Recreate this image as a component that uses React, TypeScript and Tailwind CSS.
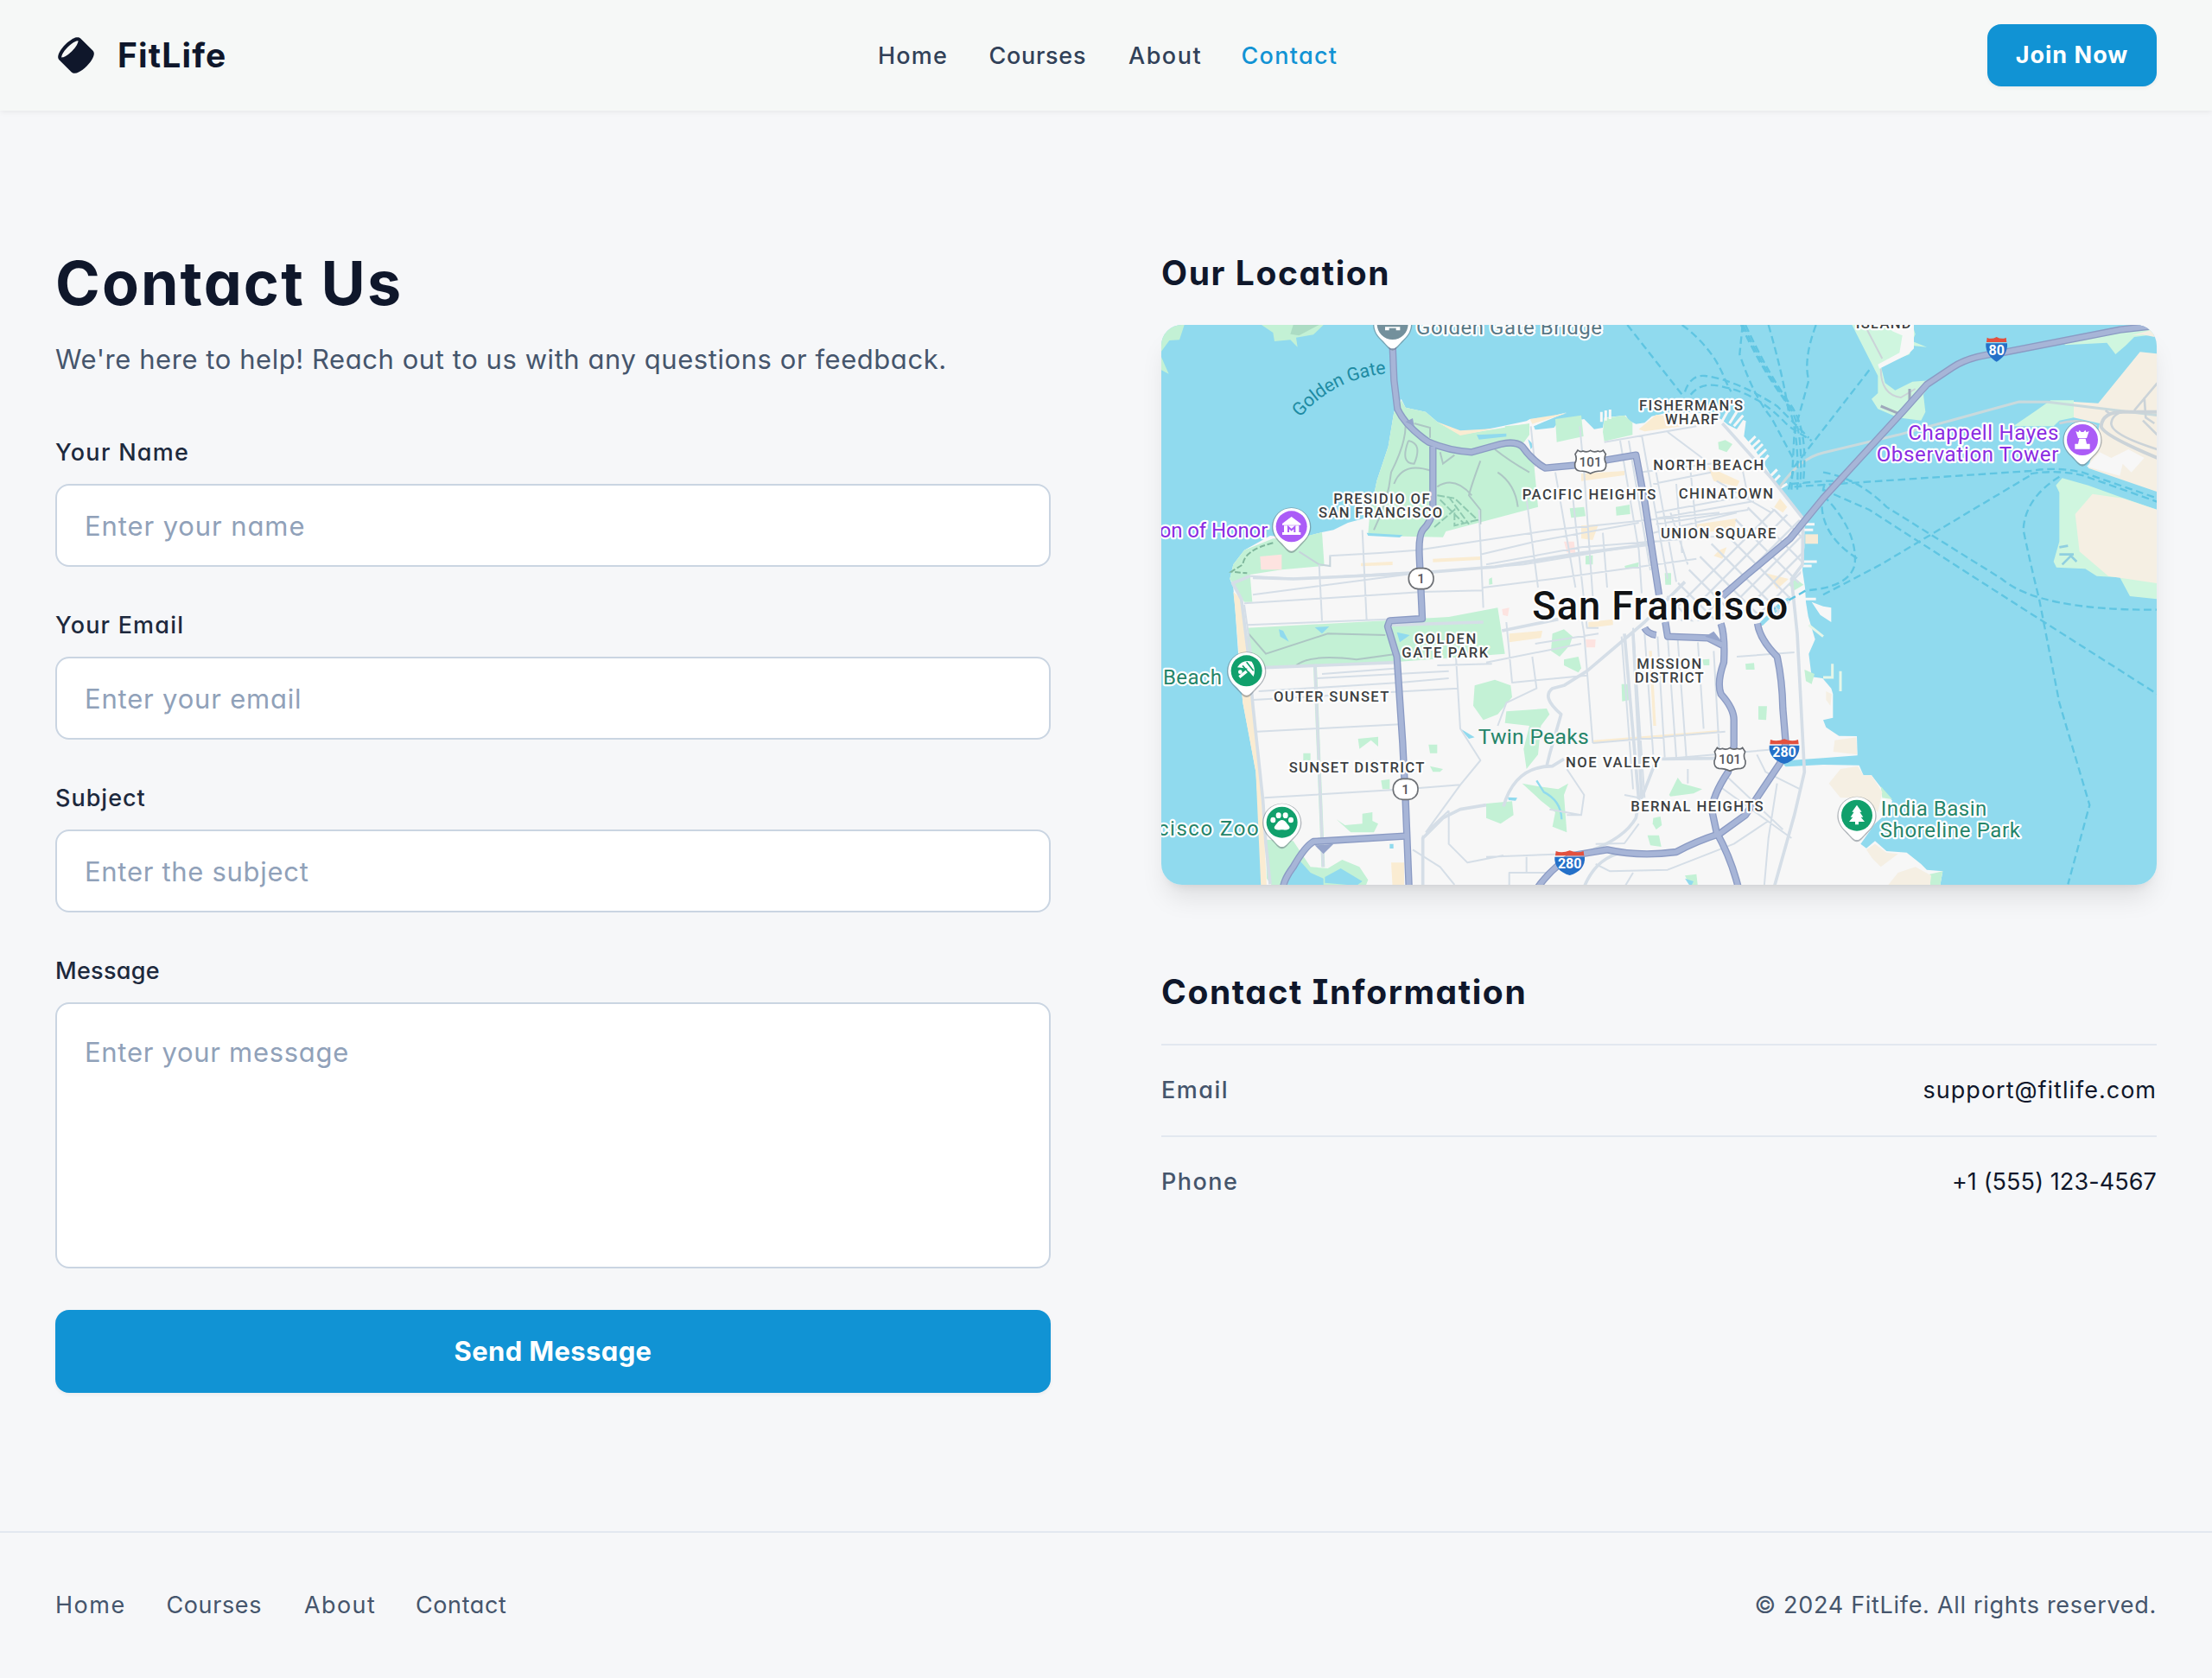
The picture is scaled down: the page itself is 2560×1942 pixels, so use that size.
import React from "react";

const headerLinks = [
  { label: "Home", className: "w-[80.5px] tracking-[1.2px]" },
  { label: "Courses", className: "w-[113.5px] tracking-[0.7px]" },
  { label: "About", className: "w-[82.5px] tracking-[1.5px]" },
  { label: "Contact", className: "w-[107.5px] tracking-[1.3px]" },
];

const footerLinks = [
  { label: "Home", className: "w-[80.5px] tracking-[1.5px]" },
  { label: "Courses", className: "w-[111.5px] tracking-[0.6px]" },
  { label: "About", className: "w-[81px] tracking-[1.4px]" },
  { label: "Contact", className: "w-[108px] tracking-[0.6px]" },
];

function Logo() {
  return (
    <svg className="size-12" viewBox="0 0 48 48" fill="currentColor">
      <path d="M42.1739 20.1739L27.8261 5.82609C29.1366 7.13663 28.3989 10.1876 26.2002 13.7654C24.8538 15.9564 22.9595 18.3449 20.6522 20.6522C18.3449 22.9595 15.9564 24.8538 13.7654 26.2002C10.1876 28.3989 7.13663 29.1366 5.82609 27.8261L20.1739 42.1739C21.4845 43.4845 24.5355 42.7467 28.1133 40.548C30.3042 39.2016 32.6927 37.3073 35 35C37.3073 32.6927 39.2016 30.3042 40.548 28.1133C42.7467 24.5355 43.4845 21.4845 42.1739 20.1739Z" />
      <path
        fillRule="evenodd"
        clipRule="evenodd"
        d="M7.24189 26.4066C7.31369 26.4411 7.64204 26.5637 8.52504 26.3738C9.59462 26.1438 11.0343 25.5311 12.7183 24.4963C14.7583 23.2426 17.0256 21.4503 19.238 19.238C21.4503 17.0256 23.2426 14.7583 24.4963 12.7183C25.5311 11.0343 26.1438 9.59463 26.3738 8.52504C26.5637 7.64204 26.4411 7.31369 26.4066 7.24189C26.345 7.21246 26.143 7.14535 25.6664 7.1918C24.9745 7.25925 23.9954 7.5498 22.7699 8.14278C20.3369 9.32007 17.3369 11.4915 14.4142 14.4142C11.4915 17.3369 9.32007 20.3369 8.14278 22.7699C7.5498 23.9954 7.25925 24.9745 7.1918 25.6664C7.14534 26.143 7.21246 26.345 7.24189 26.4066ZM4.41187 29.2403L18.7597 43.5881C19.8813 44.7097 21.4027 44.9179 22.7217 44.7893C24.0585 44.659 25.5148 44.1631 26.9723 43.4579C29.9052 42.0387 33.2618 39.5667 36.4142 36.4142C39.5667 33.2618 42.0387 29.9052 43.4579 26.9723C44.1631 25.5148 44.659 24.0585 44.7893 22.7217C44.9179 21.4027 44.7097 19.8813 43.5881 18.7597L29.2403 4.41187C27.8527 3.02428 25.8765 3.02573 24.2861 3.36776C22.6081 3.72863 20.7334 4.58419 18.8396 5.74801C16.4978 7.18716 13.9881 9.18353 11.5858 11.5858C9.18354 13.988 7.18716 16.4978 5.74802 18.8396C4.58419 20.7334 3.72863 22.6081 3.36776 24.2861C3.02573 25.8765 3.02428 27.8527 4.41187 29.2403Z"
      />
    </svg>
  );
}

/* ---------- Map ---------- */

type LabelProps = {
  x: number;
  y: number;
  len: number;
  children: string;
  size?: number;
  color?: string;
  weight?: number;
  halo?: string;
};

function MapLabel({ x, y, len, children, size = 50, color = "#3c3f42", weight = 500, halo = "#ffffff" }: LabelProps) {
  return (
    <text
      x={x}
      y={y}
      textLength={len}
      fontSize={size}
      fontWeight={weight}
      fill={color}
      stroke={halo}
      strokeWidth={13}
      strokeLinejoin="round"
      paintOrder="stroke"
    >
      {children}
    </text>
  );
}

function Pin({ x, y, color, children }: { x: number; y: number; color: string; children?: React.ReactNode }) {
  return (
    <g transform={`translate(${x} ${y})`}>
      <path d="M0 92C-12 92 -20 78 -40 58C-58 40 -68 22 -68 2A68 68 0 0 1 68 2C68 22 58 40 40 58C20 78 12 92 0 92Z" fill="#5b6670" opacity=".45" />
      <path d="M0 85C-12 85 -18 74 -38 54C-56 38 -64 20 -64 0A64 64 0 0 1 64 0C64 20 56 38 38 54C18 74 12 85 0 85Z" fill="#fff" />
      <circle r="54" fill={color} />
      <g fill="#fff">{children}</g>
    </g>
  );
}

function Interstate({ x, y, label, w }: { x: number; y: number; label: string; w: number }) {
  const h = w / 2;
  return (
    <g transform={`translate(${x} ${y})`}>
      <path d={`M${-h + 4} -40Q${-h / 2} -32 0 -42Q${h / 2} -32 ${h - 4} -40L${h - 2} -24H${-h + 2}Z`} fill="#e2513f" />
      <path d={`M${-h} -20H${h}C${h + 3} 12 ${h - 18} 34 0 44C${-h + 18} 34 ${-h - 3} 12 ${-h} -20Z`} fill="#2470c8" />
      <text textAnchor="middle" y="20" fontSize="48" fontWeight="700" fill="#fff">
        {label}
      </text>
    </g>
  );
}

function Route101({ x, y }: { x: number; y: number }) {
  return (
    <g transform={`translate(${x} ${y})`}>
      <path
        d="M-44 -40Q-36 -32 -26 -37Q-12 -31 0 -39Q12 -31 26 -37Q36 -32 44 -40L53 -26Q45 -10 54 6Q56 30 38 32Q16 32 0 41Q-16 32 -38 32Q-56 30 -54 6Q-45 -10 -53 -26Z"
        fill="#fff"
        stroke="#666a70"
        strokeWidth="5"
      />
      <text textAnchor="middle" y="16" fontSize="46" fontWeight="500" fill="#55585c">
        101
      </text>
    </g>
  );
}

function Route1({ x, y }: { x: number; y: number }) {
  return (
    <g transform={`translate(${x} ${y})`}>
      <rect x="-43" y="-37" width="86" height="72" rx="34" fill="#fff" stroke="#6e7176" strokeWidth="5" />
      <text textAnchor="middle" y="16" fontSize="46" fontWeight="500" fill="#55585c">
        1
      </text>
    </g>
  );
}

const mainland =
  "M875 305L890 335L960 350L1000 385L1080 427L1200 405L1310 382L1322 375L1370 372L1450 352L1370 385L1335 400L1340 412L1405 405L1415 392L1510 375L1545 410L1575 405L1580 370L1655 362L1665 380L1690 392L1720 388L1745 365L1790 355L1900 350L1985 375L2010 395L2040 410L2062 378L2072 382L2065 435L2095 470L2135 530L2170 590L2205 640L2275 720L2275 820L2268 900L2277 960L2280 1010L2288 1060L2312 1140L2290 1190L2300 1270L2338 1275L2368 1310L2374 1330L2374 1412L2340 1420L2350 1445L2395 1475L2457 1476L2459 1543L2340 1552L2190 1562L2210 1582L2340 1575L2465 1577L2480 1612L2508 1612L2545 1660L2580 1700L2565 1740L2520 1780L2470 1850L2490 1865L2520 1840L2560 1875L2630 1880L2680 1920L2700 1940L2755 1945L2745 2000L390 2000L388 1850L380 1740L370 1600L350 1490L325 1360L310 1200L298 1030L292 960L280 930L292 880L330 830L420 780L520 790L600 768L640 760L690 735L765 715L790 590L830 470L850 350Z";

const highways = [
  "M845 120L850 240L862 340Q890 400 970 455Q1040 485 1120 490L1220 462Q1270 450 1295 470Q1330 520 1375 545L1480 535L1690 500L1720 660L1770 985",
  "M985 470L985 690Q980 730 950 760Q935 780 938 850L948 1068L835 1075L828 1095L860 1200L880 1500L890 1700L902 2000",
  "M3500 50L3370 65L2960 145Q2850 155 2790 195L2700 255L2620 345L2340 650L2225 790L2070 920L1990 990",
  "M900 1822L570 1842Q540 1860 500 1930Q470 1970 465 2000",
  "M1720 1100Q1730 1120 1760 1125M1792 1080L1800 1130L1940 1135L1990 1160",
  "M1985 1085Q2000 1130 1995 1220Q1970 1290 1985 1330Q2030 1380 2030 1420L2030 1510L2010 1600Q1950 1690 1955 1740L1970 1810Q2020 1900 2045 2000",
  "M2112 1085Q2120 1140 2180 1200Q2198 1280 2200 1380L2210 1500L2190 1570L2070 1750L1980 1815Q1900 1840 1830 1878Q1700 1895 1590 1870L1470 1890Q1400 1930 1350 2000",
];

const streets =
  "M360 985L930 910L1300 880L1660 820L1760 800M350 920L520 930L930 905M590 880L600 1075M740 760L755 1075M1145 690L1160 1030M330 1015L950 975L1160 970M625 850L800 840L930 830L1400 760L1980 700M1160 960L1400 930L1900 860M1170 880L1500 820L2000 780M1150 845L1340 800L1700 735M1495 400L1510 560L1540 990M1325 400L1340 540M1410 560L1480 960M1310 650L1350 960M1470 640L1520 1100L1560 1100M1575 770L1590 960M1635 450L1700 830L1710 980M1665 450L1740 900M1710 430L1800 930M1760 560L1830 940M1810 700L1870 880M1580 455L1900 400M1700 560L1990 525M1750 600L1950 560M1760 700L2080 640M1760 720L2100 660M1760 740L2080 690M1750 770L2040 700M1800 420L1920 510M1970 590L2160 700M1830 600L1850 840M1880 560L1900 760M2060 550L2080 650" +
  "M340 1090L830 1070M330 1020L360 1230M600 1260L870 1240M580 1275L1040 1250M380 1320L870 1290L1040 1275M360 1350L1070 1310M375 1460L870 1435M400 1690L890 1660L1080 1645M1065 1200L1080 1450L1150 1560L1080 1645L960 1810M950 1820L950 2000M915 1870L1010 1930L1060 1992M1040 1735L960 1810M1040 1735L1040 1850L1105 1915L1230 1890M1000 1230L1190 1225" +
  "M1170 1220L1500 1155M1240 1080L1260 1290L1520 1265M1330 1200L1345 1310L1240 1360L1210 1440M1340 1155L1560 1120M1500 1060L1510 1120L1540 1500M1640 1130L1680 1660M1680 1100L1720 1690M1720 1120L1750 1540M1765 1130L1790 1550M1800 1130L1830 1550M1835 1140L1865 1550M1905 1150L1925 1450M1960 1180L1980 1540M1540 1500L2000 1460M1700 1690L1650 1680M1790 1555L2190 1520M1390 1730L1500 1750M1450 1590L1510 1680L1500 1750L1450 1750M1550 1850L1650 1848L1700 1780M1550 1920L1600 1945L1800 1940L2030 1850L2150 1770M2040 1200L2240 1185M1980 1650L2230 1830M2010 1620L2200 1800M2180 1640L2150 1830L2135 2000M1170 1895L1450 1885M1310 1895L1310 1950M1250 2000L1250 1950L1400 1950M1650 2000L1680 1950M1870 1590L1870 1640M2110 1540L2140 1600L2260 1660";

const avenues =
  "M360 925L500 930L930 910L1200 888L1500 840L1740 810M1170 2010M1520 1250L1720 1080L1860 940M1225 1110L1420 1070M1520 1250L1440 1300L1400 1310Q1360 1340 1430 1400L1390 1540L1380 1580M1990 390L2160 580L2270 720L2268 880L2230 930L2250 1120L2275 1600L2240 1750L2170 2000M1650 1120L1700 1700L1690 1760Q1650 1830 1530 1875M1680 1120L1710 1690L1760 1560M1230 1720Q1270 1580 1400 1580L1440 1555M1780 1555L1970 1553M1170 1715L1080 1730L1020 1760L950 1830L950 2000M345 1240L860 1220M1510 2000Q1550 1900 1640 1880M420 1990L405 1850L395 1700L360 1370L345 1200L320 1000L290 945L350 920M1160 1080L830 1090";

const parks = [
  "M875 310L890 335L960 350L1000 385L1080 430L1320 390L1320 430L1290 470L1335 520L1350 680L1030 765L1020 785L880 782L760 772L765 715L790 590L830 470L850 350Z",
  "M430 790L510 790L600 768L608 885L460 898L350 915L358 1010L330 1010L280 930L292 880L330 830Z",
  "M340 1100L820 1075L1040 1062L1210 1030L1235 1190L860 1218L345 1240Z",
  "M1410 375L1500 362L1508 435L1415 455Z",
  "M1575 420L1580 372L1650 362L1678 388L1678 430L1580 452Z",
  "M1235 400L1320 392L1300 440L1240 430Z",
  "M1975 455L2000 448L2025 462L2005 490L1978 480Z",
  "M1460 685L1510 680L1515 712L1465 718Z",
  "M1620 680L1668 672L1670 705L1622 710Z",
  "M1515 850L1540 848L1540 880L1515 880Z",
  "M1650 885L1700 872L1698 888L1655 896Z",
  "M1790 910L1812 910L1812 950L1792 950Z",
  "M1400 1120L1440 1105L1470 1130L1460 1160L1425 1200L1395 1180Z",
  "M1440 1210L1490 1200L1500 1240L1490 1255L1440 1230Z",
  "M1130 1300L1200 1280L1255 1300L1260 1340L1210 1400L1160 1420L1125 1370Z",
  "M1240 1390L1380 1380L1390 1400L1360 1440L1350 1540L1310 1590L1300 1520L1320 1440L1235 1430Z",
  "M1295 1640L1350 1650L1420 1660L1455 1640L1440 1680L1450 1810L1400 1790L1410 1740L1360 1700Z",
  "M1170 1710L1260 1702L1265 1750L1220 1780L1170 1760Z",
  "M1640 1295L1668 1295L1670 1350L1642 1355Z",
  "M1920 1210L1945 1208L1945 1230L1925 1230Z",
  "M2070 1225L2100 1222L2102 1245L2072 1245Z",
  "M2115 1372L2145 1372L2142 1420L2115 1418Z",
  "M1805 1680L1835 1620L1850 1640L1920 1660L1890 1675L1810 1685Z",
  "M1750 1760L1775 1755L1780 1785L1760 1800L1748 1780Z",
  "M1730 1820L1770 1820L1778 1860L1740 1855Z",
  "M725 1485L795 1478L795 1512L770 1490L730 1520Z",
  "M535 1535L560 1535L560 1560L535 1560Z",
  "M970 1505L1000 1505L1000 1535L975 1535Z",
  "M975 1580L1020 1590L1010 1600L985 1600Z",
  "M805 1630L835 1625L835 1660L810 1660Z",
  "M650 1765L680 1785L740 1780L740 1745L775 1740L775 1770L795 1780L780 1810L700 1810Z",
  "M405 1835L500 1840L560 1930L620 1935L670 1905L730 1930L760 1975L750 2000L430 2000L408 1970Z",
  "M1180 930L1190 925L1192 948L1180 950Z",
  "M570 1235L582 1235L610 1930L598 1930Z",
  "M2220 950L2245 930L2272 950L2240 970Z",
  "M2275 1245L2310 1260L2300 1295L2280 1285Z",
  "M2540 1650L2580 1695L2545 1690Z",
  "M2710 1955L2755 1945L2745 2000L2712 2000Z",
  "M1860 1960L1900 1955L1905 2000L1880 2000Z",
];

const sand = [
  "M292 975L320 1000L340 1200L372 1460L400 1840L408 2000L388 2000L370 1600L325 1360L298 1030Z",
  "M1000 385L1080 415L1200 408L1080 432Z",
  "M1322 375L1450 355L1330 392Z",
  "M1700 410L1760 360L1850 370L1850 400L1720 418Z",
  "M1900 740L2040 720L2030 760L1900 770Z",
  "M1980 830L2005 820L1990 860L1960 850Z",
  "M2190 650L2215 680L2200 700L2170 680Z",
  "M2140 910L2220 930L2180 965Z",
  "M1940 540L2050 590L2040 610L1960 590Z",
  "M1500 745L1560 740L1540 795L1500 790Z",
  "M1500 565L1650 555L1650 570L1500 590Z",
  "M735 875L845 870L845 882L735 886Z",
  "M985 860L1150 852L1150 864L985 872Z",
  "M1250 1120L1365 1110L1360 1135L1250 1150Z",
  "M1525 1080L1610 1070L1610 1090L1525 1100Z",
  "M840 1915L885 1915L885 2000L845 2000Z",
  "M1735 1180L1745 1180L1760 1440L1750 1440Z",
  "M1540 1490L1980 1455L1980 1463L1540 1500Z",
];

const industrial = [
  "M2380 1490L2455 1480L2458 1540L2375 1530Z",
  "M2360 1640L2400 1590L2460 1580L2480 1612L2508 1612L2545 1670L2530 1740L2480 1690L2400 1690Z",
  "M2490 1870L2520 1850L2560 1880L2600 1885L2540 1930L2510 1900Z",
  "M2600 1950L2660 1930L2715 1960L2710 2000L2560 2000Z",
  "M2350 1320L2370 1330L2365 1370L2350 1350Z",
];

const ferries = [
  "M1660 48L1850 290",
  "M1850 48Q1960 130 2000 240L2020 280",
  "M2060 48L2050 150Q2100 300 2160 370L2240 520",
  "M2055 48Q2120 190 2200 300Q2260 380 2250 620",
  "M2070 48Q2150 220 2230 330Q2290 420 2270 600",
  "M2062 48Q2135 205 2215 318Q2275 400 2260 610",
  "M2150 48Q2200 220 2220 350",
  "M2315 48Q2270 170 2290 240L2240 420L2230 620",
  "M1860 280Q1880 220 1930 225Q2040 240 2180 330L2290 440",
  "M1880 290Q1920 240 2000 265Q2120 290 2220 400L2300 450",
  "M2500 205L2240 540L2220 620",
  "M2240 610L3060 555Q3150 540 3240 560L3500 650",
  "M3060 565Q3150 550 3240 570L3500 662",
  "M2340 985L2540 880L3060 570",
  "M2340 560Q2460 580 2560 680L2960 930Q3090 1040 3500 1037",
  "M2340 620L2500 690L3010 1018L3500 1330",
  "M3160 575Q3040 650 3035 760Q3060 880 3090 1000L3160 1360L3265 1715L3190 1990",
  "M2340 640Q2460 760 2450 880Q2430 960 2280 970L2140 1050",
  "M2345 600Q2300 760 2460 860",
  "M2230 600L2340 590L2440 590",
];

function SanFranciscoMap() {
  const soma = Array.from({ length: 9 }, (_, i) => i);
  return (
    <svg className="block h-full w-full" viewBox="42 48 3456 1944" fontFamily="Roboto, sans-serif">
      <defs>
        <clipPath id="soma">
          <path d="M2080 650L2270 730L2262 930L2200 1060L1850 1080L1790 1000Z" />
        </clipPath>
      </defs>
      <rect x="42" y="48" width="3456" height="1944" fill="#90daee" />

      {/* Marin headlands */}
      <g fill="#c3f1d5">
        <path d="M42 48H122L105 100L70 102L42 140ZM42 160L68 218L42 205Z" />
        <path d="M390 48L430 75L435 105L490 100L515 125L510 92L570 82L605 48Z" />
      </g>
      <path d="M500 48L490 80L520 85L590 48Z" fill="#acdcc4" />

      <path d={mainland} fill="#f7f7f7" />
      <g fill="#c3f1d5">
        {parks.map((d) => (
          <path key={d} d={d} />
        ))}
      </g>
      <g fill="#faecd2">
        {sand.map((d) => (
          <path key={d} d={d} />
        ))}
      </g>
      <g fill="#f5efe3">
        {industrial.map((d) => (
          <path key={d} d={d} />
        ))}
      </g>
      <g fill="#fde3e0">
        <path d="M385 852L460 845L460 898L388 898Z" />
        <path d="M1440 800L1475 800L1480 840L1450 838Z" />
        <path d="M1515 1140L1550 1140L1548 1168L1518 1168Z" />
        <path d="M1225 1035L1250 1030L1245 1060L1228 1055Z" />
      </g>

      {/* lakes and creeks */}
      <g fill="#90daee">
        <path d="M485 1950L520 1905L560 1950L605 1970L605 1995L480 2000ZM610 1965L665 1935L740 1980L720 1995L610 1985Z" />
        <path d="M575 1098L625 1095L600 1120ZM450 1105L465 1110L485 1148L455 1130ZM860 1115L905 1125L870 1150ZM1080 1450L1130 1480L1110 1485Z" />
        <path d="M1137 430L1240 425L1240 436L1145 446ZM755 770L880 778L870 786L760 780ZM1315 445L1335 465L1325 480Z" />
        <path d="M1245 1688L1278 1690L1272 1700L1248 1698ZM835 1850H848V1866H835ZM1860 1970L1890 1980L1880 2000Z" />
        <path d="M2110 1092L2190 1010L2225 990L2225 1000L2130 1092Z" />
      </g>
      <path d="M1345 1630L1370 1670Q1430 1700 1432 1765" fill="none" stroke="#90daee" strokeWidth="7" />

      {/* piers */}
      <g stroke="#f7f7f7" strokeWidth="9">
        <path d="M1570 350V385M1585 345V380M1600 342V375M1770 300V350M1810 305V360M1985 390L2010 345M2015 390L2040 350M2030 400L2062 362M2070 470L2105 435M2080 485L2120 448M2092 500L2130 462M2105 515L2142 480M2125 530L2150 500M2150 580L2180 550M2160 600L2190 570M2180 620L2215 600M2270 740H2310M2270 760H2305M2270 870H2318M2270 885H2300M2270 1000H2315" />
      </g>
      <path d="M2278 775H2322V808H2278Z" fill="#f6ead5" />
      <path d="M2300 1010L2340 1025L2368 1030L2368 1080L2330 1055Z" fill="#f7f7f7" />
      <path d="M2290 1090L2340 1130M2340 1272H2372V1225M2400 1250V1320" fill="none" stroke="#e5f6e8" strokeWidth="9" />

      {/* presidio and golden gate park paths */}
      <g fill="none" stroke="#adc6c4" strokeWidth="6">
        <path d="M890 400Q890 460 840 560Q830 660 780 760M920 390L975 405V440M900 450Q870 530 920 530Q950 460 900 450M850 600Q880 520 980 555M1010 490L1020 530L1060 500M1000 610Q1060 570 1120 640M1150 520Q1120 600 1110 640L1150 690V740M1210 560Q1270 600 1280 680M1200 480Q1250 520 1320 560M345 1120L405 1190L620 1120L820 1125M510 1230Q560 1190 720 1210L860 1190" />
        <path d="M1000 640L1060 650L1140 725L1060 745L1060 690L990 750M1010 655L1090 735M1040 645L1110 740" stroke="#8fc9b0" strokeDasharray="26 8" />
        <path d="M430 805Q330 830 325 880L285 905L340 910" stroke="#7fb79c" strokeDasharray="20 8" />
      </g>
      <path d="M520 835L590 880L628 885V850" fill="none" stroke="#c5d3da" strokeWidth="6" />

      {/* streets */}
      <g fill="none" stroke="#d5dee7" strokeLinejoin="round">
        <path d={streets} strokeWidth="6" />
        <path d={avenues} strokeWidth="11" />
        <path d="M576 1235L604 1930" strokeWidth="10" />
        <g clipPath="url(#soma)" strokeWidth="7">
          {soma.map((i) => (
            <path key={`a${i}`} d={`M${1780 + i * 52} ${1080 + i * 10}L${2180 + i * 52} ${680 + i * 10}`} />
          ))}
          {soma.map((i) => (
            <path key={`b${i}`} d={`M${2120 - i * 42} ${640 + i * 42}L${2400 - i * 42} ${920 + i * 42}`} />
          ))}
        </g>
      </g>

      {/* Treasure Island and Yerba Buena */}
      <path d="M2440 48L2530 225L2530 285L2508 305L2530 340L2600 370L2680 380L2695 350L2688 290L2720 240L2650 245L2590 275L2555 250L2540 190L2640 150L2650 120L2700 125L2650 105L2660 80L2650 48Z" fill="#cff6df" />
      <path d="M2570 48H2655V130L2635 150L2535 200L2530 185L2605 145L2615 85L2580 70Z" fill="#f7f7f7" />
      <path d="M2490 60L2545 165M2540 200Q2540 290 2610 300L2660 270" fill="none" stroke="#cbd3d8" strokeWidth="6" />
      <path d="M2540 330L2600 355L2640 320M2640 270V330" fill="none" stroke="#9fa9bb" strokeWidth="9" />

      {/* Oakland and Alameda */}
      <path d="M3170 105L3350 80L3500 48V80L3420 90L3390 120L3355 150L3325 110L3180 118Z" fill="#cff6df" />
      <path d="M3410 85L3500 60V92L3450 82Z" fill="#f5efe3" />
      <path d="M3000 400L3080 345L3130 310L3210 310V370L3160 380L3140 400Z" fill="#cff6df" />
      <path d="M3210 315L3295 320L3440 142L3500 148V628L3260 545L3290 440L3300 390L3210 370Z" fill="#f5efe3" />
      <path d="M3255 540L3300 490L3340 510L3400 480L3455 510L3410 560L3380 530L3370 572Z" fill="#f7f7f7" />
      <path d="M3170 580L3260 605L3370 645L3500 690V1000L3405 990L3370 925L3290 920L3250 895L3150 890L3140 870L3160 800L3160 630L3148 605Z" fill="#cff6df" />
      <path d="M3275 635L3380 650L3500 690V945L3330 920L3230 835L3215 705Z" fill="#f5efe3" />
      <path d="M3160 820L3190 815M3160 845H3210M3170 880L3200 850L3220 870" fill="none" stroke="#90cfe0" strokeWidth="8" />
      <g fill="none" stroke="#cbd3d8" strokeWidth="8">
        <path d="M2190 610Q2260 510 2340 492L2600 430L3020 315L3120 316L3280 335L3500 362" strokeWidth="9" stroke="#c9dadd" />
        <path d="M3500 350H3380Q3310 350 3305 400Q3310 430 3500 510" strokeWidth="12" />
        <path d="M3500 480Q3340 430 3340 390Q3345 350 3400 348M3500 250L3420 345M3455 300L3460 370L3490 390M3160 390Q3230 370 3290 400M3320 345L3340 360M3450 380L3500 430" />
      </g>

      {/* ferries */}
      <g fill="none" stroke="#5fc5e2" strokeWidth="7" strokeDasharray="26 14">
        {ferries.map((d) => (
          <path key={d} d={d} />
        ))}
      </g>

      {/* highways */}
      <g fill="none" strokeLinejoin="round">
        <g stroke="#8b9bc4" strokeWidth="25">
          {highways.map((d) => (
            <path key={d} d={d} />
          ))}
        </g>
        <g stroke="#a7b5d7" strokeWidth="17">
          {highways.map((d) => (
            <path key={d} d={d} />
          ))}
        </g>
      </g>
      <path d="M575 1855L640 1850L605 1885ZM1930 1130L1960 1112L1990 1150ZM890 385L915 372L920 400Z" fill="#95a4cb" />

      {/* shields */}
      <Interstate x={2942} y={132} label="80" w={74} />
      <Interstate x={2205} y={1528} label="280" w={104} />
      <Interstate x={1460} y={1915} label="280" w={104} />
      <Route101 x={1532} y={523} />
      <Route101 x={2016} y={1556} />
      <Route1 x={944} y={930} />
      <Route1 x={890} y={1661} />

      {/* pins */}
      <Pin x={845} y={45} color="#73909c">
        <path d="M-26 22V10H26V22H12V14H-12V22Z" />
      </Pin>
      <Pin x={494} y={748} color="#ab5cf7">
        <path d="M-32 -10L0 -34L32 -10V-5H-32ZM-26 -3H26V20H32V29H-32V20H-26Z" />
        <path d="M-11 20V2L0 12L11 2V20" fill="none" stroke="#ab5cf7" strokeWidth="6" />
      </Pin>
      <Pin x={3240} y={447} color="#ab5cf7">
        <path d="M-23 -30L-14 -26L-10 -34L-4 -27H4L10 -34L14 -26L23 -30L15 -6H-15ZM-11 -4H11L15 14H26V32H-26V14H-15Z" />
      </Pin>
      <Pin x={338} y={1249} color="#11a06c">
        <path d="M-32 -12Q-15 -40 18 -32Q34 -8 24 20L8 2L-22 26L-28 18L4 -8Z" />
        <circle cx="-22" cy="4" r="7" />
        <path d="M-14 -18L14 14M0 -30L24 0" stroke="#11a06c" strokeWidth="5" />
      </Pin>
      <Pin x={461} y={1775} color="#11a06c">
        <ellipse cx="-31" cy="-8" rx="9" ry="10" />
        <ellipse cx="-12" cy="-24" rx="9" ry="10" />
        <ellipse cx="12" cy="-24" rx="9" ry="10" />
        <ellipse cx="31" cy="-8" rx="9" ry="10" />
        <path d="M0 -8C12 -8 16 4 24 12C32 22 22 28 0 26C-22 28 -32 22 -24 12C-16 4 -12 -8 0 -8Z" />
      </Pin>
      <Pin x={2457} y={1751} color="#11a06c">
        <path d="M0 -36L17 -12H10L22 6H14L27 22H6V32H-6V22H-27L-14 6H-22L-10 -12H-17Z" />
      </Pin>

      {/* place names */}
      <MapLabel x={927} y={81} len={645} size={72} color="#587886" weight={400}>Golden Gate Bridge</MapLabel>
      <path id="golden-gate" d="M523 370Q645 230 835 216" fill="none" />
      <text fontSize="64" fill="#1e8ba3" textLength="345">
        <textPath href="#golden-gate" textLength="345">Golden Gate</textPath>
      </text>
      <MapLabel x={35} y={787} len={377} size={72} color="#8a2be2" weight={400}>on of Honor</MapLabel>
      <MapLabel x={48} y={1295} len={204} size={72} color="#25856a" weight={400}>Beach</MapLabel>
      <MapLabel x={30} y={1822} len={350} size={72} color="#25856a" weight={400}>cisco Zoo</MapLabel>
      <MapLabel x={2635} y={446} len={522} size={72} color="#8a2be2" weight={400}>Chappell Hayes</MapLabel>
      <MapLabel x={2525} y={521} len={632} size={72} color="#8a2be2" weight={400}>Observation Tower</MapLabel>
      <MapLabel x={2540} y={1752} len={368} size={72} color="#25856a" weight={400}>India Basin</MapLabel>
      <MapLabel x={2537} y={1828} len={487} size={72} color="#25856a" weight={400}>Shoreline Park</MapLabel>
      <MapLabel x={1142} y={1502} len={384} size={74} color="#25856a" weight={400} halo="#f7f7f7">Twin Peaks</MapLabel>
      <MapLabel x={2453} y={61} len={192}>ISLAND</MapLabel>
      <MapLabel x={640} y={668} len={334}>PRESIDIO OF</MapLabel>
      <MapLabel x={588} y={716} len={430}>SAN FRANCISCO</MapLabel>
      <MapLabel x={1701} y={346} len={360}>FISHERMAN'S</MapLabel>
      <MapLabel x={1791} y={393} len={186}>WHARF</MapLabel>
      <MapLabel x={1750} y={551} len={384}>NORTH BEACH</MapLabel>
      <MapLabel x={1295} y={654} len={464}>PACIFIC HEIGHTS</MapLabel>
      <MapLabel x={1838} y={652} len={328}>CHINATOWN</MapLabel>
      <MapLabel x={1776} y={790} len={400}>UNION SQUARE</MapLabel>
      <MapLabel x={920} y={1154} len={215}>GOLDEN</MapLabel>
      <MapLabel x={877} y={1202} len={300}>GATE PARK</MapLabel>
      <MapLabel x={432} y={1357} len={400}>OUTER SUNSET</MapLabel>
      <MapLabel x={485} y={1601} len={470}>SUNSET DISTRICT</MapLabel>
      <MapLabel x={1693} y={1243} len={225}>MISSION</MapLabel>
      <MapLabel x={1685} y={1291} len={240}>DISTRICT</MapLabel>
      <MapLabel x={1446} y={1583} len={328}>NOE VALLEY</MapLabel>
      <MapLabel x={1672} y={1736} len={460}>BERNAL HEIGHTS</MapLabel>
      <MapLabel x={1330} y={1071} len={888} size={136} color="#111315">San Francisco</MapLabel>
    </svg>
  );
}

/* ---------- Form ---------- */

const fieldClass =
  "block w-full rounded-2xl border-2 border-slate-300 bg-white px-8 text-[31px] text-slate-900 outline-none placeholder:text-slate-400";
const labelClass = "text-[27px] leading-10 font-medium text-slate-800";

function Field({
  label,
  placeholder,
  labelTracking,
  inputTracking,
}: {
  label: string;
  placeholder: string;
  labelTracking: string;
  inputTracking: string;
}) {
  return (
    <label className="flex flex-col gap-4">
      <span className={`${labelClass} ${labelTracking}`}>{label}</span>
      <input className={`${fieldClass} ${inputTracking} h-24`} placeholder={placeholder} />
    </label>
  );
}

function InfoRow({ label, value, valueTracking }: { label: string; value: string; valueTracking: string }) {
  return (
    <div className="flex justify-between border-t-2 border-slate-200 py-8 text-[27px] leading-10">
      <span className="font-medium tracking-[1.5px] text-slate-600">{label}</span>
      <span className={`${valueTracking} text-slate-900`}>{value}</span>
    </div>
  );
}

export default function App() {
  return (
    <div className="flex min-h-[1942px] flex-col bg-[#f6f7f9] font-['Inter',sans-serif] text-slate-900 [font-feature-settings:'cv11']">
      <header className="flex h-32 items-center justify-between bg-[#f6f8f7] px-16 shadow-[0_2px_6px_rgba(0,0,0,0.06)]">
        <div className="flex w-[240px] items-center gap-6">
          <Logo />
          <span className="pb-0.5 text-[39px] leading-none font-bold tracking-[1.15px]">FitLife</span>
        </div>
        <nav className="flex gap-12 pt-px text-[27px] leading-10 font-medium text-slate-700">
          {headerLinks.map((link) => (
            <a key={link.label} className={`${link.className} whitespace-nowrap last:text-[#1193d4]`}>
              {link.label}
            </a>
          ))}
        </nav>
        <div className="flex w-[240px] justify-end">
          <button className="h-[72px] w-[196px] rounded-2xl bg-[#1193d4] text-[27px] font-bold tracking-[1px] text-white shadow-[0_2px_4px_rgba(0,0,0,0.05)]">
            Join Now
          </button>
        </div>
      </header>

      <main className="grid flex-1 grid-cols-2 gap-32 px-16 py-40">
        <section>
          <h1 className="text-[70px] leading-[80px] font-bold tracking-[2.1px]">Contact Us</h1>
          <p className="mt-6 text-[31px] leading-[48px] tracking-[0.56px] text-slate-600">
            We're here to help! Reach out to us with any questions or feedback.
          </p>
          <form className="mt-16 flex flex-col gap-12">
            <Field label="Your Name" placeholder="Enter your name" labelTracking="tracking-[1.3px]" inputTracking="tracking-[0.9px]" />
            <Field label="Your Email" placeholder="Enter your email" labelTracking="tracking-[1.2px]" inputTracking="tracking-[0.8px]" />
            <Field label="Subject" placeholder="Enter the subject" labelTracking="tracking-[1px]" inputTracking="tracking-[0.7px]" />
            <label className="flex flex-col gap-4">
              <span className={`${labelClass} tracking-[0.3px]`}>Message</span>
              <textarea
                className={`${fieldClass} h-[308px] resize-none py-8 leading-[48px] tracking-[0.7px]`}
                placeholder="Enter your message"
              />
            </label>
            <button
              type="button"
              className="h-24 rounded-2xl bg-[#1193d4] text-[31px] font-bold tracking-[0.35px] text-white shadow-[0_2px_4px_rgba(0,0,0,0.05)]"
            >
              Send Message
            </button>
          </form>
        </section>

        <section>
          <h2 className="text-[39px] leading-[56px] font-bold tracking-[1.6px]">Our Location</h2>
          <div className="mt-8 h-[648px] overflow-hidden rounded-3xl shadow-[0_20px_30px_-6px_rgba(0,0,0,0.1),0_8px_12px_-8px_rgba(0,0,0,0.1)]">
            <SanFranciscoMap />
          </div>
          <h2 className="mt-24 mb-8 text-[39px] leading-[56px] font-bold tracking-[1.6px] [font-feature-settings:'cv11','cv08']">
            Contact Information
          </h2>
          <InfoRow label="Email" value="support@fitlife.com" valueTracking="tracking-[1px]" />
          <InfoRow label="Phone" value="+1 (555) 123-4567" valueTracking="tracking-[0.1px]" />
        </section>
      </main>

      <footer className="flex justify-between border-t-2 border-slate-200 px-16 py-16 text-[27px] leading-10 text-slate-600">
        <nav className="flex gap-12">
          {footerLinks.map((link) => (
            <a key={link.label} className={`${link.className} whitespace-nowrap`}>
              {link.label}
            </a>
          ))}
        </nav>
        <p className="tracking-[0.7px]">© 2024 FitLife. All rights reserved.</p>
      </footer>
    </div>
  );
}
